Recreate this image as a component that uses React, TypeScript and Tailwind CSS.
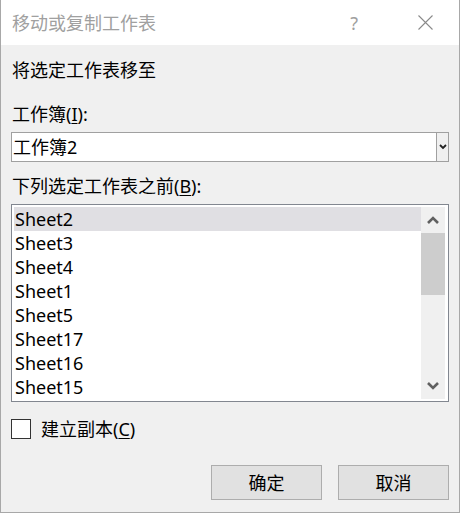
import React from "react";

const font = { fontFamily: '"Noto Sans", "Noto Sans CJK SC", sans-serif' };

const sheets = ["Sheet2", "Sheet3", "Sheet4", "Sheet1", "Sheet5", "Sheet17", "Sheet16", "Sheet15"];

function Chevron({ up }: { up?: boolean }) {
  return (
    <svg width="12" height="8" viewBox="0 0 12 8">
      <path
        d={up ? "M1 7 L6 2 L11 7" : "M1 1 L6 6 L11 1"}
        fill="none"
        stroke="#606060"
        strokeWidth="2.6"
      />
    </svg>
  );
}

export default function App() {
  return (
    <div
      className="w-[460px] h-[513px] flex flex-col bg-[#f0f0f0] border-l border-r border-b border-[#a8a8a8] text-[18px] text-black overflow-hidden"
      style={font}
    >
      {/* Title bar */}
      <div className="h-[45px] shrink-0 bg-white flex items-center pl-[11px] pr-[26px]">
        <span className="text-[18px] leading-[24px] text-[#a0a0a0]">移动或复制工作表</span>
        <span className="ml-auto mr-[60px] text-[18px] leading-[24px] text-[#a0a0a0]">?</span>
        <svg width="15" height="15" viewBox="0 0 15 15">
          <path d="M0.5 0.5 L14.5 14.5 M14.5 0.5 L0.5 14.5" stroke="#8a8a8a" strokeWidth="1.1" />
        </svg>
      </div>

      <div className="flex flex-col pl-[10px] pr-[10px]">
        <div className="pl-[1px] mt-[13px] leading-[24px]">将选定工作表移至</div>
        <div className="pl-[1px] mt-[20px] leading-[24px]">
          工作簿(<span className="underline underline-offset-2">I</span>):
        </div>

        {/* Combobox */}
        <div className="mt-[6px] h-[30px] flex border border-[#a0a0a0] bg-white">
          <div className="flex-1 flex items-center pl-[1px] leading-[24px]">工作簿2</div>
          <div className="w-[12px] border-l border-[#a0a0a0] bg-[#f0f0f0] flex items-center justify-center">
            <svg width="8" height="6" viewBox="0 0 8 6">
              <path d="M1 1 L4 4 L7 1" fill="none" stroke="#222" strokeWidth="1.8" />
            </svg>
          </div>
        </div>

        <div className="pl-[1px] mt-[12px] leading-[24px]">
          下列选定工作表之前(<span className="underline underline-offset-2">B</span>):
        </div>

        {/* Listbox */}
        <div className="mt-[6px] h-[198px] flex border border-[#828790] bg-white p-[2px] pr-[3px]">
          <div className="flex-1 flex flex-col">
            {sheets.map((s, i) => (
              <div
                key={s}
                className={
                  "h-[24px] shrink-0 flex items-center pl-[1px] leading-[24px] " +
                  (i === 0 ? "bg-[#e0dfe3]" : "")
                }
              >
                {s}
              </div>
            ))}
          </div>
          <div className="w-[24px] bg-[#f0f0f0] flex flex-col">
            <div className="h-[26px] flex items-center justify-center">
              <Chevron up />
            </div>
            <div className="h-[62px] bg-[#cdcdcd]" />
            <div className="flex-1" />
            <div className="h-[26px] flex items-center justify-center">
              <Chevron />
            </div>
          </div>
        </div>

        {/* Checkbox */}
        <div className="mt-[15px] flex items-center">
          <div className="w-[20px] h-[20px] border border-[#333333] bg-white" />
          <span className="ml-[10px] leading-[24px]">
            建立副本(<span className="underline underline-offset-2">C</span>)
          </span>
        </div>

        {/* Buttons */}
        <div className="mt-[24px] flex justify-end gap-[16px]">
          <button className="w-[111px] h-[35px] bg-[#e1e1e1] border border-[#adadad] text-[18px] leading-[24px]">
            确定
          </button>
          <button className="w-[111px] h-[35px] bg-[#e1e1e1] border border-[#adadad] text-[18px] leading-[24px]">
            取消
          </button>
        </div>
      </div>
    </div>
  );
}
